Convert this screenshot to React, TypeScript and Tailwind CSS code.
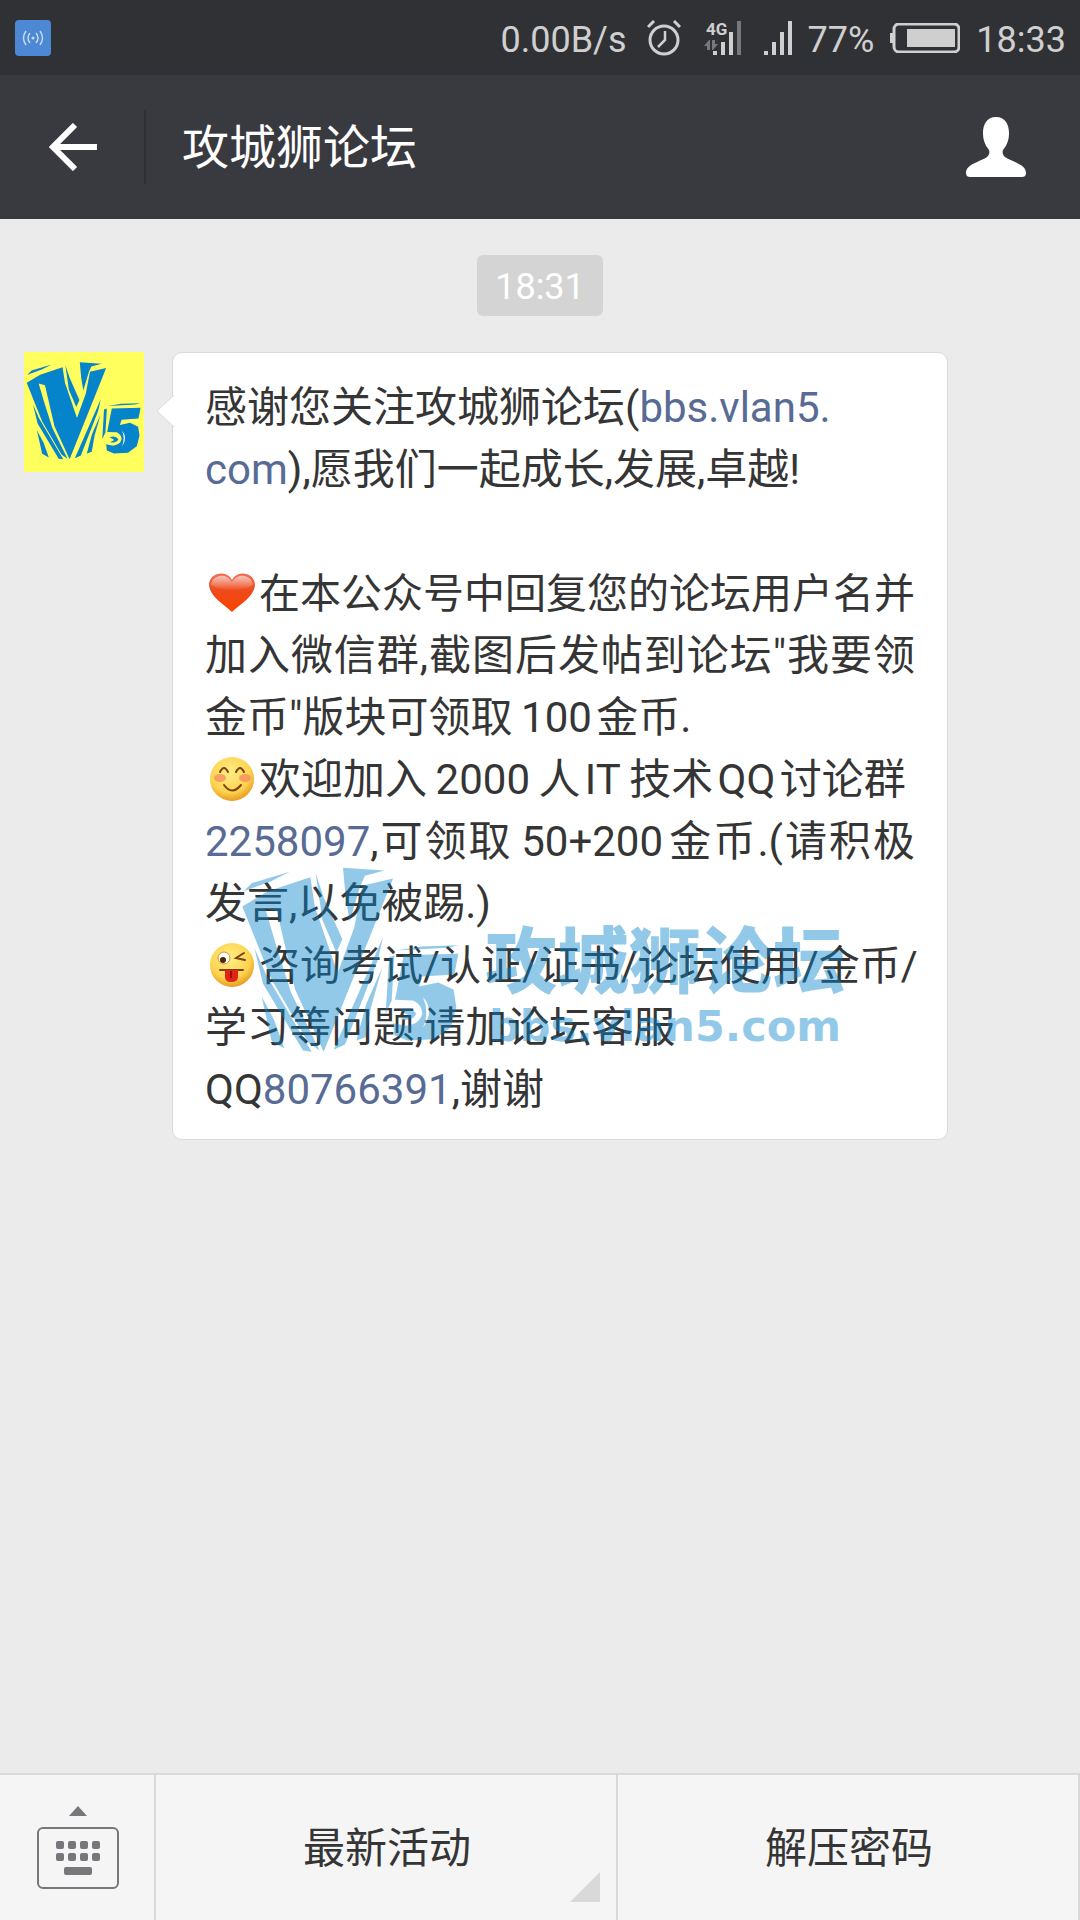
import React from 'react';
import { clsx } from 'clsx';

const V5Logo: React.FC<{ className?: string }> = ({ className }) => (
  <svg viewBox="60 80 660 560" className={className} fill="#0584cc" aria-hidden="true">
    {/* V */}
    <path d="M68 152 L92 128 L206 94 L150 122 Z" />
    <path d="M64 198 L141 152 L268 110 L282 200 L350 398 L400 260 L424 136 L516 114 L478 210 L308 634 L222 446 L168 212 L132 202 L164 310 L210 456 L296 630 L262 606 L152 418 Z" />
    <path d="M284 98 L308 170 L364 296 L346 336 L304 238 Z" />
    <path d="M366 82 L490 90 L432 106 L418 136 L386 242 L374 170 Z" />
    <path d="M100 322 L134 400 L272 634 L246 630 L126 430 Z" />
    <path d="M122 468 L160 540 L190 624 L152 602 Z" />
    <path d="M486 290 L470 360 L372 612 L338 628 L416 450 Z" />
    <path d="M484 380 L450 500 L434 590 L406 600 L436 490 Z" />
    {/* 5 */}
    <path d="M526 330 L600 318 L712 314 L680 322 Z" />
    <path d="M504 350 L520 345 L512 480 L494 520 Z" />
    <path d="M548 344 L712 340 L700 402 L604 408 L594 438 L652 426 L698 448 L706 500 L690 560 L640 596 L560 600 L520 584 L516 548 L556 556 Q598 550 604 518 Q602 492 576 480 L522 478 Z" />
    <path d="M536 508 Q570 496 586 520 Q574 544 538 536 L562 524 Z" />
    <path d="M606 470 Q642 510 606 562 Q626 514 606 470 Z" fill="#fff" />
  </svg>
);

const HeartEmoji = () => (
  <svg viewBox="0 0 48 42" role="img" aria-label="heart" className="inline-block w-12 mx-[3px] -mt-2">
    <defs>
      <linearGradient id="heart" x1="0" y1="0" x2="0" y2="1">
        <stop offset="0" stopColor="#f0705a" />
        <stop offset="0.45" stopColor="#ef4a1a" />
        <stop offset="1" stopColor="#f84400" />
      </linearGradient>
      <linearGradient id="heartShine" x1="0" y1="0" x2="0" y2="1">
        <stop offset="0" stopColor="#fff" stopOpacity="0.6" />
        <stop offset="1" stopColor="#fff" stopOpacity="0" />
      </linearGradient>
    </defs>
    <path d="M24 40 C17 33 2 25 1 13 C1 1 18 -3 24 8 C30 -3 47 1 47 13 C46 25 31 33 24 40 Z" fill="url(#heart)" />
    <path d="M3 13 C4 3 18 0 24 10 C30 0 44 3 45 13 C34 20 14 20 3 13 Z" fill="url(#heartShine)" />
  </svg>
);

const FaceBase = ({ id }: { id: string }) => (
  <>
    <defs>
      <radialGradient id={id} cx="0.45" cy="0.35" r="0.65">
        <stop offset="0" stopColor="#ffee86" />
        <stop offset="0.7" stopColor="#fdd350" />
        <stop offset="1" stopColor="#e79d21" />
      </radialGradient>
    </defs>
    <circle cx="24" cy="24" r="22" fill={`url(#${id})`} />
  </>
);

const BlushEmoji = () => (
  <svg viewBox="0 0 48 48" role="img" aria-label="blush" className="inline-block w-12 mx-[3px] -mt-2">
    <FaceBase id="faceBlush" />
    <ellipse cx="12" cy="23" rx="6" ry="4" fill="#f58a63" opacity="0.75" />
    <ellipse cx="37" cy="23" rx="6" ry="4" fill="#f58a63" opacity="0.75" />
    <g fill="none" stroke="#7a4210" strokeWidth="2" strokeLinecap="round">
      <path d="M12 17 Q16 9 20 17" />
      <path d="M28 17 Q32 9 36 17" />
      <path d="M16 30 Q24 41 33 30" />
    </g>
  </svg>
);

const WinkEmoji = () => (
  <svg viewBox="0 0 48 48" role="img" aria-label="wink" className="inline-block w-12 mx-[3px] -mt-2">
    <FaceBase id="faceWink" />
    <circle cx="16" cy="17" r="6" fill="#fff" stroke="#d9912b" strokeWidth="1" />
    <circle cx="15" cy="19" r="3" fill="#4a2608" />
    <g fill="none" stroke="#7a4210" strokeWidth="2" strokeLinecap="round">
      <path d="M36 12 L28 17 L37 19" />
      <path d="M12 29 H35" />
    </g>
    <path d="M17 29 H30 V36 Q30 41 23 41 Q17 41 17 36 Z" fill="#e2231a" />
    <path d="M23 30 V37" stroke="#96110c" strokeWidth="2" />
  </svg>
);

const StatusBar = () => (
  <div className="flex items-center h-[75px] pl-[15px] pr-[14px] bg-[#303135] text-[#cfcfd0] text-4xl">
    <svg viewBox="0 0 36 36" className="size-9">
      <rect width="36" height="36" rx="4" fill="#4d88d4" />
      <g fill="none" stroke="#c9dcf3" strokeWidth="1.4">
        <path d="M11 11 Q6 18 11 25 M15 13 Q11 18 15 23 M21 13 Q25 18 21 23 M25 11 Q30 18 25 25" />
      </g>
      <circle cx="18" cy="18" r="1.5" fill="#c9dcf3" />
    </svg>
    <span className="ml-auto pt-1">0.00B/s</span>
    <svg viewBox="0 0 34 36" className="w-[34px] h-9 ml-5" fill="none" stroke="#cfcfd0" strokeWidth="3">
      <circle cx="17" cy="20" r="14" />
      <path d="M18 11 V20 L11 27" strokeWidth="2.5" />
      <path d="M1 7 L7 1 M27 1 L33 7" />
    </svg>
    <svg viewBox="0 0 37 36" className="w-[37px] h-9 ml-6 overflow-visible" fill="#cfcfd0">
      <text x="1" y="15" fontFamily="Roboto" fontWeight="700" fontSize="17">4G</text>
      <path d="M-1 26 L4 20 H5 V30 H2 V26 Z M7 20 V30 H8 L13 24 H10 V20 Z" fill="#77787b" />
      <path d="M8 31 h4 v4 h-4 Z M16 22 h4 v13 h-4 Z M24 12 h4 v23 h-4 Z" />
      <path d="M32 1 h4 v34 h-4 Z" fill="#77787b" />
    </svg>
    <svg viewBox="0 0 28 36" className="w-7 h-9 ml-[22px]" fill="#cfcfd0">
      <path d="M0 31 h4 v4 h-4 Z M8 22 h4 v13 h-4 Z M16 12 h4 v23 h-4 Z M24 1 h4 v34 h-4 Z" />
    </svg>
    <span className="ml-4 pt-1">77%</span>
    <svg viewBox="0 0 70 30" className="w-[70px] h-[30px] ml-4" fill="#cfcfd0">
      <rect x="4" y="1" width="65" height="28" rx="5" fill="none" stroke="#cfcfd0" strokeWidth="3" />
      <path d="M0 10 h4 v10 h-4 Z M17 6 h48 v18 h-48 Z" />
    </svg>
    <span className="ml-4 pt-1">18:33</span>
  </div>
);

const TitleBar = () => (
  <header className="flex items-center h-36 bg-[#393a3f] text-white">
    <button aria-label="Back" className="flex items-center justify-center w-36 h-full pl-[2px]">
      <svg viewBox="0 0 48 48" className="size-12" fill="none" stroke="#fff" strokeWidth="6">
        <path d="M26 2 L4 24 L26 46 M5 24 H48" />
      </svg>
    </button>
    <div className="w-[2px] h-[74px] bg-[#2f3034]" />
    <h1 className="ml-9 pt-[2px] text-[47px]">攻城狮论坛</h1>
    <button aria-label="Profile" className="ml-auto mr-[53px]">
      <svg viewBox="0 0 62 60" className="w-[62px] h-[60px]" fill="#fff">
        <path d="M31 0 C40 0 44 7 44 16 C44 23 42 28 38 33 C37 36 38 38 40 40 C47 45 61 47 61 56 C61 59 59 60 57 60 H5 C3 60 1 59 1 56 C1 47 15 45 22 40 C24 38 25 36 24 33 C20 28 18 23 18 16 C18 7 22 0 31 0 Z" />
      </svg>
    </button>
  </header>
);

const Link: React.FC<{ children: React.ReactNode }> = ({ children }) => (
  <a href="#" className="text-[#576b95]">{children}</a>
);

interface Line {
  content: React.ReactNode;
  justify?: boolean;
  tight?: boolean;
}

// thin (\u2009) and hair (\u200a) spaces sit between Chinese text and latin words or numbers
const lines: Line[] = [
  { content: <>感谢您关注攻城狮论坛(<Link>bbs.vlan5.</Link></> },
  { content: <><Link>com</Link>),愿我们一起成长,发展,卓越!</> },
  { content: <>&nbsp;</> },
  { content: <><HeartEmoji />在本公众号中回复您的论坛用户名并</>, tight: true },
  { content: '加入微信群,截图后发帖到论坛"我要领', justify: true },
  { content: '金币"版块可领取\u2009100\u200a金币.' },
  { content: <><BlushEmoji />{'欢迎加入\u20092000\u2009人\u200aIT\u2009技术\u200aQQ\u200a讨论群'}</> },
  { content: <><Link>2258097</Link>{',可领取\u200950+200\u200a金币.(请积极'}</>, justify: true },
  { content: '发言,以免被踢.)' },
  { content: <><WinkEmoji />咨询考试/认证/证书/论坛使用/金币/</>, tight: true },
  { content: '学习等问题,请加论坛客服' },
  { content: <>QQ<Link>80766391</Link>,谢谢</> },
];

const Watermark = () => (
  <div className="absolute left-[68px] top-[514px] flex items-start opacity-43 text-[#0584cc] pointer-events-none whitespace-nowrap">
    <V5Logo className="w-[220px] h-[187px]" />
    <div className="ml-6 mt-15">
      <div className="text-[72px] leading-[72px] font-black">攻城狮论坛</div>
      <div className="ml-1 text-[43px] leading-[54px] font-bold font-['DejaVu_Sans',sans-serif]">bbs.vlan5.com</div>
    </div>
  </div>
);

const Message = () => (
  <div className="flex items-start mt-9 pl-6 pr-6">
    <div className="shrink-0 size-[120px] px-[2px] py-[10px] bg-[#ffff5e]">
      <V5Logo className="w-full" />
    </div>
    <div className="relative ml-7 w-full max-w-[776px] pl-8 pr-8 pt-6 pb-[18px] bg-white border border-[#d9d9d9] rounded-[10px]">
      <svg viewBox="0 0 18 32" className="absolute -left-[17px] top-[42px] w-[18px] h-8">
        <path d="M18 0 L1 16 L18 32" fill="#fff" stroke="#d9d9d9" />
      </svg>
      <div className="text-[#353535] leading-[62px] whitespace-nowrap">
        {lines.map((line, i) => (
          <p
            key={i}
            className={clsx(
              'h-[62px]',
              line.tight ? 'text-[41px]' : 'text-[42px]',
              line.justify && 'whitespace-normal [text-align-last:justify]'
            )}
          >
            {line.content}
          </p>
        ))}
      </div>
      <Watermark />
    </div>
  </div>
);

const MenuBar = () => (
  <nav className="flex h-[147px] bg-[#f5f5f5] border-t-2 border-[#d9d9d9] text-[42px] text-[#353535]">
    <button aria-label="Keyboard" className="flex items-center justify-center w-[156px] pl-[2px] pb-[2px] border-r-2 border-[#d9d9d9]">
      <svg viewBox="0 0 82 84" className="w-[82px] h-[84px]" fill="#77777b">
        <path d="M41 1 L50 11 H32 Z" />
        <rect x="1" y="23" width="80" height="60" rx="5" fill="none" stroke="#77777b" strokeWidth="2" />
        {[19, 31, 43, 55].map((x) => (
          <React.Fragment key={x}>
            <rect x={x} y="36" width="8" height="8" rx="2" />
            <rect x={x} y="48" width="8" height="8" rx="2" />
          </React.Fragment>
        ))}
        <rect x="27" y="62" width="28" height="8" rx="2" />
      </svg>
    </button>
    <button className="relative flex-1 pt-[2px] pl-[2px] border-r-2 border-[#d9d9d9]">
      最新活动
      <svg viewBox="0 0 30 30" className="absolute right-4 bottom-[18px] size-[30px]">
        <path d="M30 0 V30 H0 Z" fill="#d9d9d9" />
      </svg>
    </button>
    <button className="flex-1 pt-[2px] pl-[2px] border-r-2 border-[#d9d9d9]">解压密码</button>
  </nav>
);

const App = () => {
  return (
    <div className="flex flex-col min-h-screen bg-[#ebebeb] font-[Roboto,'Noto_Sans_CJK_SC',sans-serif]">
      <StatusBar />
      <TitleBar />
      <main className="flex-1">
        <div className="flex justify-center mt-9">
          <time className="px-[18px] pt-[3px] leading-[58px] rounded-md bg-[#d4d4d4] text-white text-4xl">18:31</time>
        </div>
        <Message />
      </main>
      <MenuBar />
    </div>
  );
};

export default App;
